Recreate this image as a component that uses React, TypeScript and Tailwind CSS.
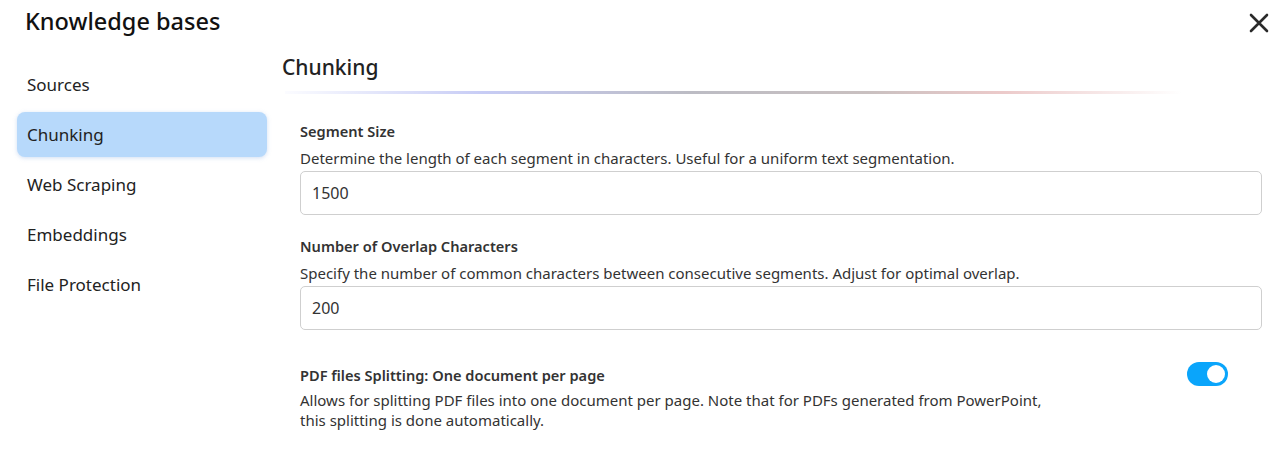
import React from "react";

const font = { fontFamily: '"Noto Sans", "Open Sans", sans-serif' };

function NavItem({ label, active }: { label: string; active?: boolean }) {
  return (
    <div
      className={
        "h-[45px] flex items-center pl-[10px] rounded-[8px] text-[17px] text-[#222] " +
        (active ? "bg-[#b7d9fb] shadow-[0_1px_4px_rgba(120,160,220,0.35)]" : "")
      }
    >
      {label}
    </div>
  );
}

function Field({ label, desc, value }: { label: string; desc: string; value: string }) {
  return (
    <div className="flex flex-col">
      <div className="text-[14.6px] font-semibold text-[#333] leading-[20px]">{label}</div>
      <div className="text-[15px] text-[#333] leading-[20px] mt-[7px]">{desc}</div>
      <div className="mt-[3px] h-[44px] border border-[#cfcfcf] rounded-[5px] flex items-center px-[11px] text-[16px] text-[#333]">
        {value}
      </div>
    </div>
  );
}

export default function App() {
  return (
    <div className="w-[1286px] h-[455px] bg-white relative overflow-hidden" style={font}>
      <div className="flex items-center justify-between pl-[25px] pr-[16px] h-[44px]">
        <div className="text-[23.5px] text-[#111] font-medium">Knowledge bases</div>
        <svg width="22" height="22" viewBox="0 0 22 22" className="mt-[2px]">
          <path d="M3 3 L19 19 M19 3 L3 19" stroke="#2a2a2a" strokeWidth="2.6" strokeLinecap="round" />
        </svg>
      </div>
      <div className="flex">
        <div className="w-[250px] ml-[17px] mt-[18px] flex flex-col gap-[5px] shrink-0">
          <NavItem label="Sources" />
          <NavItem label="Chunking" active />
          <NavItem label="Web Scraping" />
          <NavItem label="Embeddings" />
          <NavItem label="File Protection" />
        </div>
        <div className="flex-1 ml-[15px] mr-[24px] flex flex-col">
          <div className="text-[21px] text-[#222] font-medium leading-[28px] mt-[9px]">Chunking</div>
          <div className="mt-[10px] ml-[3px] mr-[80px] h-[3px] bg-[linear-gradient(90deg,rgba(235,238,255,0.2)_0%,#c7ccf5_22%,#bcbcc4_45%,#c9c0c0_65%,#eccaca_80%,rgba(255,255,255,0)_100%)]" />
          <div className="pl-[18px] flex flex-col mt-[27px]">
            <Field
              label="Segment Size"
              desc="Determine the length of each segment in characters. Useful for a uniform text segmentation."
              value="1500"
            />
            <div className="mt-[21px]">
              <Field
                label="Number of Overlap Characters"
                desc="Specify the number of common characters between consecutive segments. Adjust for optimal overlap."
                value="200"
              />
            </div>
            <div className="mt-[35px] flex justify-between items-start pr-[34px]">
              <div className="flex flex-col">
                <div className="text-[14.6px] font-semibold text-[#333] leading-[20px]">
                  PDF files Splitting: One document per page
                </div>
                <div className="text-[15px] text-[#333] leading-[20px] mt-[5px] max-w-[760px]">
                  Allows for splitting PDF files into one document per page. Note that for PDFs generated from PowerPoint,
                  <br />
                  this splitting is done automatically.
                </div>
              </div>
              <div className="w-[41px] h-[24px] rounded-full bg-[#0aa5fb] flex items-center justify-end pr-[3px] mt-[-3px]">
                <div className="w-[18px] h-[18px] rounded-full bg-white" />
              </div>
            </div>
          </div>
        </div>
      </div>
    </div>
  );
}
